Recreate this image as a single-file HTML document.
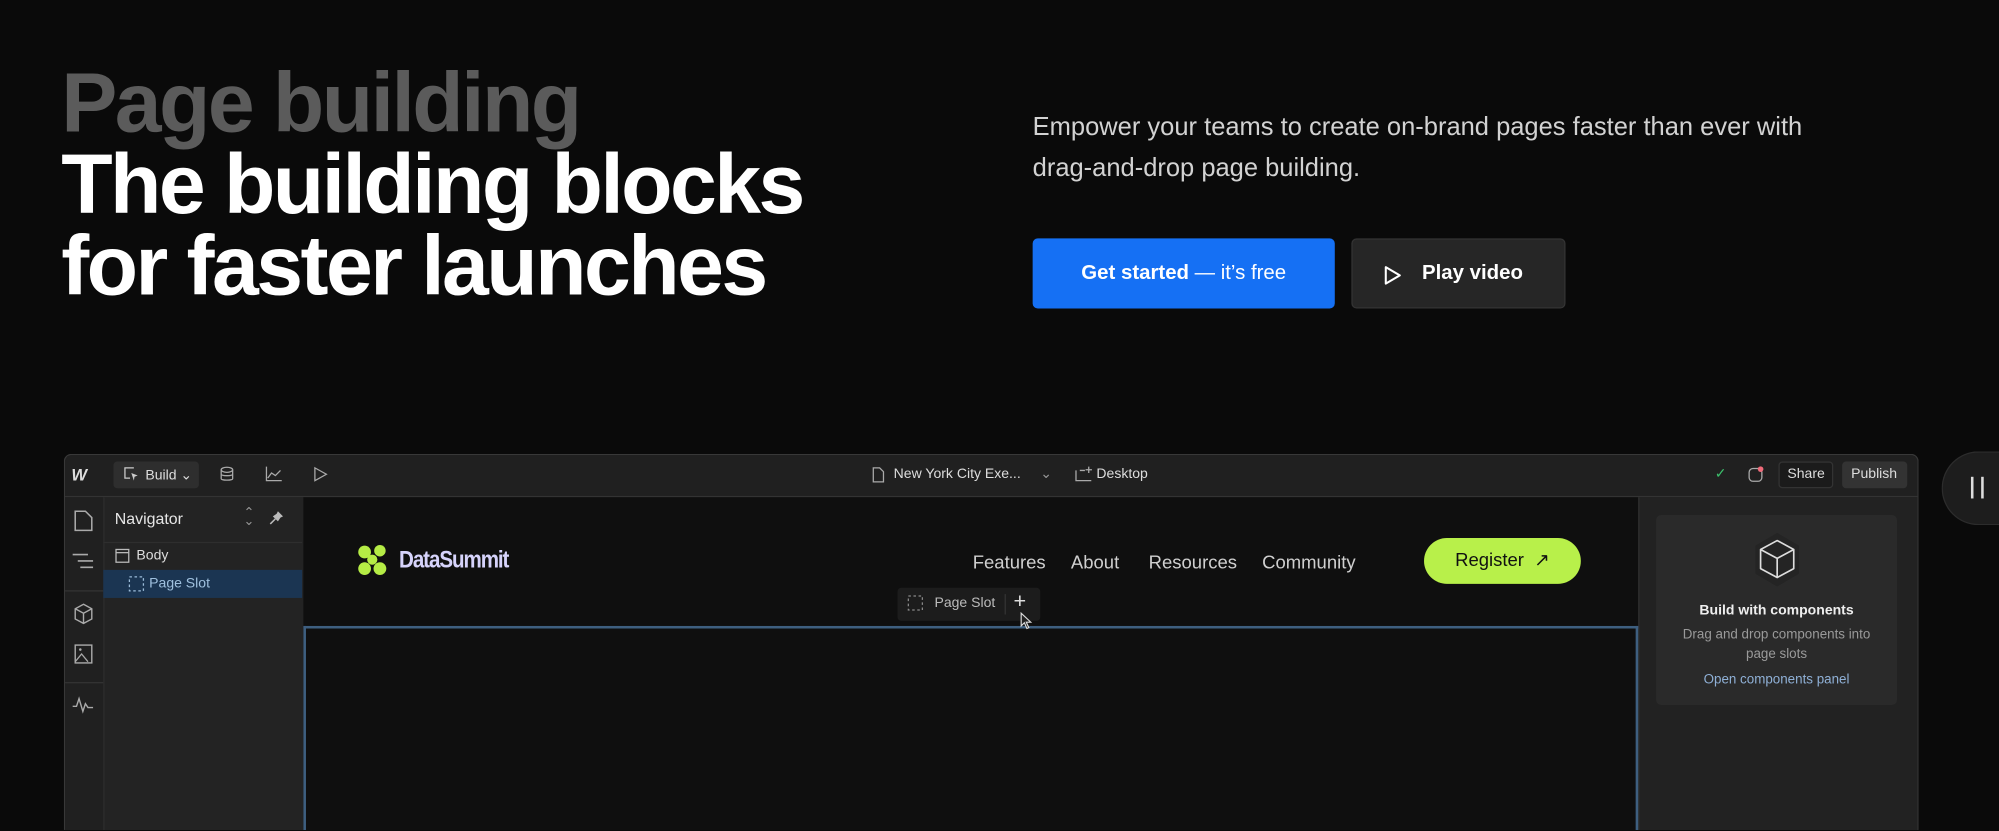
<!DOCTYPE html>
<html><head><meta charset="utf-8"><style>
*{margin:0;padding:0;box-sizing:border-box}
html,body{width:1999px;height:831px;overflow:hidden;background:#0a0a0a;font-family:"Liberation Sans",sans-serif}
#s{position:absolute;left:0;top:0;width:1568px;height:651px;overflow:hidden;transform:scale(1.27487);transform-origin:0 0}
.a{position:absolute}
h1{position:absolute;left:48px;top:48px;font-size:66px;line-height:64px;letter-spacing:-2px;font-weight:700;color:#fff;white-space:nowrap}
h1 span{color:#5b5b5b}
.p{left:810px;top:84px;font-size:20px;line-height:32px;color:#d2d2d2;white-space:nowrap}
.btn{position:absolute;top:187px;height:55px;border-radius:4px;color:#fff;font-size:16px;display:flex;align-items:center;justify-content:center}
.tb{font-size:11px;color:#ddd;white-space:nowrap}
svg{position:absolute;overflow:visible}
</style></head><body><div id="s">
<h1><span>Page building</span><br>The building blocks<br>for faster launches</h1>
<div class="a p">Empower your teams to create on-brand pages faster than ever with<br>drag-and-drop page building.</div>
<div class="btn" style="left:810px;width:237px;background:#1570f4"><b>Get started</b>&nbsp;— it’s free</div>
<div class="btn" style="left:1060px;width:168px;background:#262626;border:1px solid #343434"><svg style="left:24px;top:20px" width="14" height="16"><path d="M2 1.5 L13 8 L2 14.5Z" fill="none" stroke="#fff" stroke-width="1.6" stroke-linejoin="round"/></svg><b style="margin-left:22px">Play video</b></div>

<div class="a" style="left:50px;top:356px;width:1455px;height:295px;background:#1e1e1e;border:1px solid #383838;border-bottom:none;border-radius:6px 6px 0 0;overflow:hidden">
 <div class="a" style="left:0;top:0;width:1455px;height:33px;background:#202020;border-bottom:1px solid #333"></div>
 <div class="a" style="left:0;top:33px;width:31px;height:262px;background:#202020;border-right:1px solid #2d2d2d"></div>
 <div class="a" style="left:31px;top:33px;width:156px;height:262px;background:#232323"></div>
 <div class="a" style="left:187px;top:33px;width:1047px;height:262px;background:#0f0f0f"></div>
 <div class="a" style="left:1234px;top:33px;width:221px;height:262px;background:#222;border-left:1px solid #2e2e2e"></div>
 <div class="a" style="left:187px;top:134px;width:1047px;height:200px;border:2px solid #3e5f80;border-bottom:none"></div>
</div>
<div class="a" style="left:56px;top:365px;font-size:13px;font-weight:900;font-style:italic;color:#ddd;letter-spacing:-2px">W</div>
<div class="a" style="left:89px;top:362px;width:67px;height:21px;background:#2e2e2e;border-radius:3px"></div>
<svg style="left:97px;top:366px" width="12" height="12"><path d="M8 1H1V9H5" fill="none" stroke="#ccc"/><path d="M6 5L11 7L8.5 8L8 11Z" fill="#ccc"/></svg>
<div class="a tb" style="left:114px;top:366px">Build ⌄</div>
<svg style="left:173px;top:366px" width="10" height="12"><ellipse cx="5" cy="2.5" rx="4.5" ry="2" fill="none" stroke="#aaa"/><path d="M0.5 2.5V9.5C0.5 11 9.5 11 9.5 9.5V2.5M0.5 6C0.5 7.5 9.5 7.5 9.5 6" fill="none" stroke="#aaa"/></svg>
<svg style="left:208px;top:366px" width="13" height="12"><path d="M1 0V11H13M2 9L5 5L8 7L12 3" fill="none" stroke="#aaa"/></svg>
<svg style="left:246px;top:366px" width="11" height="12"><path d="M1 1L10 6L1 11Z" fill="none" stroke="#aaa"/></svg>
<svg style="left:684px;top:366px" width="10" height="13"><path d="M1 1H6L9 4V12H1Z" fill="none" stroke="#aaa"/></svg>
<div class="a tb" style="left:701px;top:366px">New York City Exe...</div>
<div class="a tb" style="left:816px;top:365px;color:#999">⌄</div>
<svg style="left:843px;top:366px" width="14" height="12"><path d="M1 3V11H13M4 3H8" fill="none" stroke="#aaa"/><path d="M11 0V5M8.5 2.5H13.5" stroke="#aaa"/></svg>
<div class="a tb" style="left:860px;top:366px">Desktop</div>
<div class="a tb" style="left:1345px;top:365px;color:#3bbf6b">✓</div>
<svg style="left:1371px;top:366px" width="12" height="13"><rect x="1" y="1.5" width="10" height="10" rx="3" fill="none" stroke="#aaa"/><circle cx="10" cy="2" r="2.2" fill="#f06b7a"/></svg>
<div class="a" style="left:1395px;top:362px;width:43px;height:21px;background:#1b1b1b;border:1px solid #333;border-radius:3px"></div>
<div class="a tb" style="left:1402px;top:366px">Share</div>
<div class="a" style="left:1445px;top:362px;width:51px;height:21px;background:#333;border-radius:3px"></div>
<div class="a tb" style="left:1452px;top:366px">Publish</div>
<svg style="left:58px;top:400px" width="15" height="17"><path d="M1 1H9L14 6V16H1Z" fill="none" stroke="#aaa" stroke-width="1.2"/></svg>
<svg style="left:57px;top:434px" width="17" height="12"><path d="M0 1H12M4 6H16M6 11H16" stroke="#aaa" stroke-width="1.2"/></svg>
<div class="a" style="left:51px;top:463px;width:30px;height:1px;background:#333"></div>
<svg style="left:58px;top:473px" width="15" height="17"><path d="M7.5 1L14 4.5V12.5L7.5 16L1 12.5V4.5ZM1 4.5L7.5 8L14 4.5M7.5 8V16" fill="none" stroke="#aaa" stroke-width="1.1"/></svg>
<svg style="left:58px;top:505px" width="15" height="16"><rect x="1" y="1" width="13" height="14" fill="none" stroke="#aaa" stroke-width="1.1"/><path d="M1 14L6 8L11 14" fill="none" stroke="#aaa"/><circle cx="5" cy="4.5" r="1" fill="#aaa"/></svg>
<div class="a" style="left:51px;top:535px;width:30px;height:1px;background:#333"></div>
<svg style="left:57px;top:547px" width="16" height="12"><path d="M0 7H3L5 1L8 11L10 5L12 8H16" fill="none" stroke="#aaa" stroke-width="1.1"/></svg>
<div class="a" style="left:90px;top:400px;font-size:12.5px;color:#e6e6e6">Navigator</div>
<div class="a tb" style="left:191px;top:399px;color:#999;font-size:10px;line-height:7px">⌃<br>⌄</div>
<svg style="left:211px;top:400px" width="12" height="12"><path d="M7 1L11 5L9 6L7 9L3 5L6 3Z" fill="#bbb"/><path d="M5 7L1 11" stroke="#bbb" stroke-width="1.2"/></svg>
<div class="a" style="left:81px;top:425px;width:156px;height:1px;background:#2e2e2e"></div>
<svg style="left:90px;top:430px" width="12" height="12"><rect x="1" y="1" width="10" height="10" fill="none" stroke="#bbb"/><path d="M1 3.5H11" stroke="#bbb"/></svg>
<div class="a tb" style="left:107px;top:430px;color:#ddd">Body</div>
<div class="a" style="left:81px;top:447px;width:156px;height:22px;background:#1b3552"></div>
<svg style="left:101px;top:452px" width="12" height="12"><rect x="0.5" y="0.5" width="11" height="11" fill="none" stroke="#9bbcd9" stroke-dasharray="2 2"/></svg>
<div class="a tb" style="left:117px;top:452px;color:#9fc0de">Page Slot</div>
<svg style="left:280px;top:427px" width="25" height="25"><circle cx="6" cy="6" r="5" fill="#b5ec45"/><circle cx="18" cy="5" r="4.5" fill="#b5ec45"/><circle cx="6" cy="19" r="5" fill="#b5ec45"/><circle cx="18" cy="19" r="5" fill="#b5ec45"/><circle cx="12" cy="12" r="4" fill="#b5ec45"/></svg>
<div class="a" style="left:313px;top:429px;font-size:19px;font-weight:700;color:#d6d3fb;letter-spacing:-1px;transform:scaleX(.85);transform-origin:0 0">DataSummit</div>
<div class="a" style="left:763px;top:434px;font-size:14.5px;color:#cfcfcf">Features</div>
<div class="a" style="left:840px;top:434px;font-size:14.5px;color:#cfcfcf">About</div>
<div class="a" style="left:901px;top:434px;font-size:14.5px;color:#cfcfcf">Resources</div>
<div class="a" style="left:990px;top:434px;font-size:14.5px;color:#cfcfcf">Community</div>
<div class="a" style="left:1117px;top:422px;width:123px;height:36px;border-radius:18px;background:#b8f04a;color:#111;font-size:14.5px;display:flex;align-items:center;justify-content:center">Register&nbsp;&nbsp;↗</div>
<div class="a" style="left:704px;top:461px;width:112px;height:26px;background:#1c1c1c;border-radius:3px"></div>
<svg style="left:712px;top:467px" width="12" height="12"><rect x="0.5" y="0.5" width="11" height="11" fill="none" stroke="#888" stroke-dasharray="2 2"/></svg>
<div class="a tb" style="left:733px;top:467px;color:#bbb">Page Slot</div>
<div class="a" style="left:788px;top:466px;width:1px;height:16px;background:#333"></div>
<div class="a" style="left:795px;top:462px;font-size:17px;color:#ddd">+</div>
<svg style="left:800px;top:480px" width="10" height="14"><path d="M1 1V11L3.5 8.5L5.5 13L7 12.3L5 8H8.5Z" fill="#222" stroke="#ddd" stroke-width=".9"/></svg>
<div class="a" style="left:1299px;top:404px;width:189px;height:149px;background:#2a2a2a;border-radius:4px"></div>
<svg style="left:1376px;top:417px" width="36" height="44"><path d="M18 1L35 11V33L18 43L1 33V11Z" fill="#242424"/><path d="M18 7L31 14V29L18 36L5 29V14ZM5 14L18 21L31 14M18 21V36" fill="none" stroke="#ddd" stroke-width="1.3" stroke-linejoin="round"/></svg>
<div class="a" style="left:1299px;top:473px;width:189px;text-align:center;font-size:11px;font-weight:700;color:#eee">Build with components</div>
<div class="a" style="left:1299px;top:491px;width:189px;text-align:center;font-size:10.5px;line-height:15px;color:#9a9a9a">Drag and drop components into<br>page slots</div>
<div class="a" style="left:1299px;top:527px;width:189px;text-align:center;font-size:10.5px;color:#8fb0d6">Open components panel</div>
<div class="a" style="left:1523px;top:354px;width:45px;height:58px;border-radius:29px 0 0 29px;background:#1d1d1d;border:1px solid #2c2c2c;border-right:none"></div>
<div class="a" style="left:1546px;top:374px;width:2px;height:17px;background:#ddd"></div>
<div class="a" style="left:1554px;top:374px;width:2px;height:17px;background:#ddd"></div>
</div></body></html>
